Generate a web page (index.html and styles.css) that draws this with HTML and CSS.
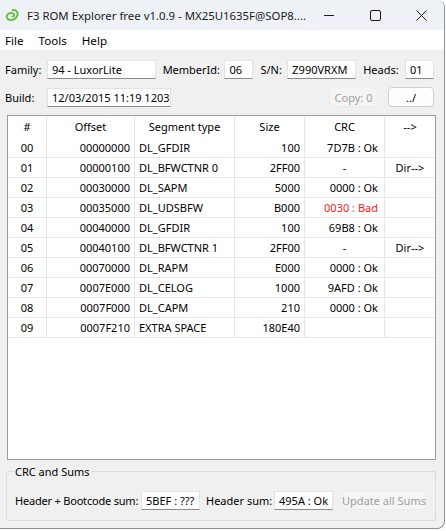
FILE: index.html
```html
<!DOCTYPE html>
<html lang="en">
<head>
  <meta charset="UTF-8" />
  <title>F3 ROM Explorer free v1.0.9</title>
  <link rel="stylesheet" href="styles.css">
</head>
<body>

<div class="window">

  <!-- Title Bar -->
  <div class="titlebar">
    <svg class="app-icon" width="14" height="14" viewBox="0 0 14 14">
      <path d="M7.5 2.2 C10.6 1.6 13 3.6 12.6 6.6 C12.2 9.8 8.6 12.4 5 12 C2.2 11.7 1 9.4 2 7.2 C3 5.2 6 4.4 8.2 5.4 C9.8 6.2 9.4 8.2 7.6 8.6" fill="none" stroke="#6cbd45" stroke-width="2" stroke-linecap="round"/>
    </svg>
    <span class="title">F3 ROM Explorer free v1.0.9 - MX25U1635F@SOP8....</span>
    <div class="win-buttons">
      <span class="win-btn">
        <svg width="10" height="10" viewBox="0 0 10 10"><path d="M0 5.5 H10" stroke="#1a1a1a" stroke-width="1"/></svg>
      </span>
      <span class="win-btn">
        <svg width="11" height="11" viewBox="0 0 11 11"><rect x="0.5" y="0.5" width="10" height="10" rx="1.5" fill="none" stroke="#1a1a1a" stroke-width="1"/></svg>
      </span>
      <span class="win-btn">
        <svg width="11" height="11" viewBox="0 0 11 11"><path d="M0.5 0.5 L10.5 10.5 M10.5 0.5 L0.5 10.5" stroke="#1a1a1a" stroke-width="1"/></svg>
      </span>
    </div>
  </div>

  <!-- Menu -->
  <div class="menubar">
    <span class="menu-item">File</span>
    <span class="menu-item">Tools</span>
    <span class="menu-item">Help</span>
  </div>

  <div class="content">

    <!-- Header info -->
    <div class="form-row">
      <span class="label lbl-family">Family:</span>
      <span class="field f-family">94 - LuxorLite</span>
      <span class="label lbl-member">MemberId:</span>
      <span class="field f-small">06</span>
      <span class="label lbl-sn">S/N:</span>
      <span class="field f-sn">Z990VRXM</span>
      <span class="label lbl-heads">Heads:</span>
      <span class="field f-small">01</span>
    </div>

    <div class="form-row row-build">
      <span class="label lbl-family">Build:</span>
      <span class="field f-build">12/03/2015 11:19 1203</span>
      <span class="spacer"></span>
      <span class="button disabled btn-copy">Copy: 0</span>
      <span class="button btn-up">../</span>
    </div>

    <!-- Segment list -->
    <div class="listview">
      <div class="lv-row lv-header">
        <div class="cell c">#</div>
        <div class="cell c">Offset</div>
        <div class="cell c">Segment type</div>
        <div class="cell c">Size</div>
        <div class="cell c">CRC</div>
        <div class="cell c last">--&gt;</div>
      </div>
      <div id="rows"></div>
    </div>

    <!-- CRC and Sums -->
    <fieldset class="group">
      <legend>CRC and Sums</legend>
      <div class="sums-row">
        <span class="label lbl-hb">Header + Bootcode sum:</span>
        <span class="field f-sum">5BEF : ???</span>
        <span class="label lbl-hs">Header sum:</span>
        <span class="field f-sum">495A : Ok</span>
        <span class="button disabled btn-update">Update all Sums</span>
      </div>
    </fieldset>

  </div>
</div>

<script>
const segments = [
  ["00", "00000000", "DL_GFDIR", "100", "7D7B : Ok", ""],
  ["01", "00000100", "DL_BFWCTNR 0", "2FF00", "-", "Dir-->"],
  ["02", "00030000", "DL_SAPM", "5000", "0000 : Ok", ""],
  ["03", "00035000", "DL_UDSBFW", "B000", "0030 : Bad", ""],
  ["04", "00040000", "DL_GFDIR", "100", "69B8 : Ok", ""],
  ["05", "00040100", "DL_BFWCTNR 1", "2FF00", "-", "Dir-->"],
  ["06", "00070000", "DL_RAPM", "E000", "0000 : Ok", ""],
  ["07", "0007E000", "DL_CELOG", "1000", "9AFD : Ok", ""],
  ["08", "0007F000", "DL_CAPM", "210", "0000 : Ok", ""],
  ["09", "0007F210", "EXTRA SPACE", "180E40", "", ""]
];

const rows = document.getElementById('rows');
segments.forEach(seg => {
  const row = document.createElement('div');
  row.className = 'lv-row lv-item';
  const classes = ['c', 'r', 'l', 'r', 'r crc', 'c last'];
  seg.forEach((text, i) => {
    const cell = document.createElement('div');
    cell.className = 'cell ' + classes[i];
    if (i === 4 && text === '-') cell.className = 'cell c';
    if (i === 4 && text.indexOf('Bad') >= 0) cell.className += ' bad';
    cell.textContent = text;
    row.appendChild(cell);
  });
  rows.appendChild(row);
});
</script>

</body>
</html>
```

FILE: styles.css
```css
/* General */
body {
  margin: 0;
  padding: 0;
  background-color: #ffffff;
  font-family: "Noto Sans", "Segoe UI", sans-serif;
  font-size: 11px;
  color: #000000;
}

.window {
  width: 445px;
  height: 529px;
  box-sizing: border-box;
  border-right: 1px solid #8e8e8e;
  border-bottom: 1px solid #8e8e8e;
  border-radius: 0 8px 8px 0;
  overflow: hidden;
  background-color: #f0f0f0;
  display: flex;
  flex-direction: column;
}

/* Title bar */
.titlebar {
  height: 30px;
  flex-shrink: 0;
  display: flex;
  align-items: center;
  background-color: #eef2f7;
  font-size: 11.4px;
}

.app-icon {
  flex-shrink: 0;
  margin-left: 5px;
  margin-right: 8px;
}

.title {
  flex: 1;
  min-width: 0;
  white-space: nowrap;
  color: #1a1a1a;
}

.win-buttons {
  display: flex;
  height: 100%;
  flex-shrink: 0;
}

.win-btn {
  width: 46px;
  display: flex;
  align-items: center;
  justify-content: center;
}

/* Menu */
.menubar {
  height: 20px;
  flex-shrink: 0;
  display: flex;
  align-items: center;
  background-color: #ffffff;
  padding-left: 5px;
  font-size: 11.6px;
}

.menu-item {
  margin-right: 15px;
}

/* Main content */
.content {
  flex: 1;
  display: flex;
  flex-direction: column;
  padding: 10px 10px 0 0;
}

.form-row {
  display: flex;
  align-items: center;
  height: 19px;
  padding-left: 5px;
}

.row-build {
  margin-top: 8px;
  height: 20px;
}

.label {
  white-space: nowrap;
}

.lbl-family { width: 42px; }
.lbl-member { width: 62px; margin-left: 7px; }
.lbl-sn { width: 27px; margin-left: 7px; }
.lbl-heads { width: 42px; margin-left: 7px; }

.field {
  box-sizing: border-box;
  height: 19px;
  line-height: 18px;
  padding: 0 4px;
  background-color: #ffffff;
  border: 1px solid #e3e3e3;
  border-bottom: 1px solid #8a8a8a;
  white-space: nowrap;
  overflow: hidden;
}

.f-family { width: 109px; }
.f-small { width: 29px; }
.f-sn { width: 69px; }
.f-build { width: 124px; }
.f-sum { width: 59px; }

.spacer {
  flex: 1;
}

.button {
  box-sizing: border-box;
  height: 20px;
  display: flex;
  align-items: center;
  justify-content: center;
  border: 1px solid #d0d0d0;
  border-radius: 4px;
  background-color: #fdfdfd;
  white-space: nowrap;
}

.button.disabled {
  color: #a0a0a0;
  background-color: #f5f5f5;
  border-color: #ececec;
}

.btn-copy { width: 49px; }
.btn-up { width: 46px; margin-left: 10px; }

/* List view */
.listview {
  margin: 8px 0 0 7px;
  width: 429px;
  height: 345px;
  box-sizing: border-box;
  border: 1px solid #9c9c9c;
  background-color: #ffffff;
}

.lv-row {
  display: grid;
  grid-template-columns: 39px 88px 100px 70px 80px 50px;
}

.lv-header {
  height: 22px;
}

.lv-item {
  height: 20px;
  box-sizing: border-box;
  border-bottom: 1px solid #e6e6e6;
}

.lv-header .cell {
  line-height: 22px;
}

.cell {
  box-sizing: border-box;
  border-right: 1px solid #e6e6e6;
  padding: 0 4px;
  line-height: 19px;
  white-space: nowrap;
  overflow: hidden;
}

.cell.last {
  border-right: none;
}

.cell.c { text-align: center; }
.cell.r { text-align: right; }
.cell.l { text-align: left; }
.cell.crc { padding-right: 6px; }
.cell.bad { color: #ff1a1a; }

/* CRC and Sums group */
.group {
  margin: 4px 0 0 6px;
  width: 430px;
  box-sizing: border-box;
  height: 57px;
  padding: 0 0 0 8px;
  border: 1px solid #dcdcdc;
  border-radius: 2px;
}

.group legend {
  padding: 0 1px;
  margin-left: -1px;
}

.sums-row {
  display: flex;
  align-items: center;
  margin-top: 12px;
}

.lbl-hb { width: 126px; letter-spacing: -0.2px; }
.lbl-hs { width: 68px; margin-left: 6px; }
.btn-update { width: 84px; margin-left: 9px; height: 19px; }
```
